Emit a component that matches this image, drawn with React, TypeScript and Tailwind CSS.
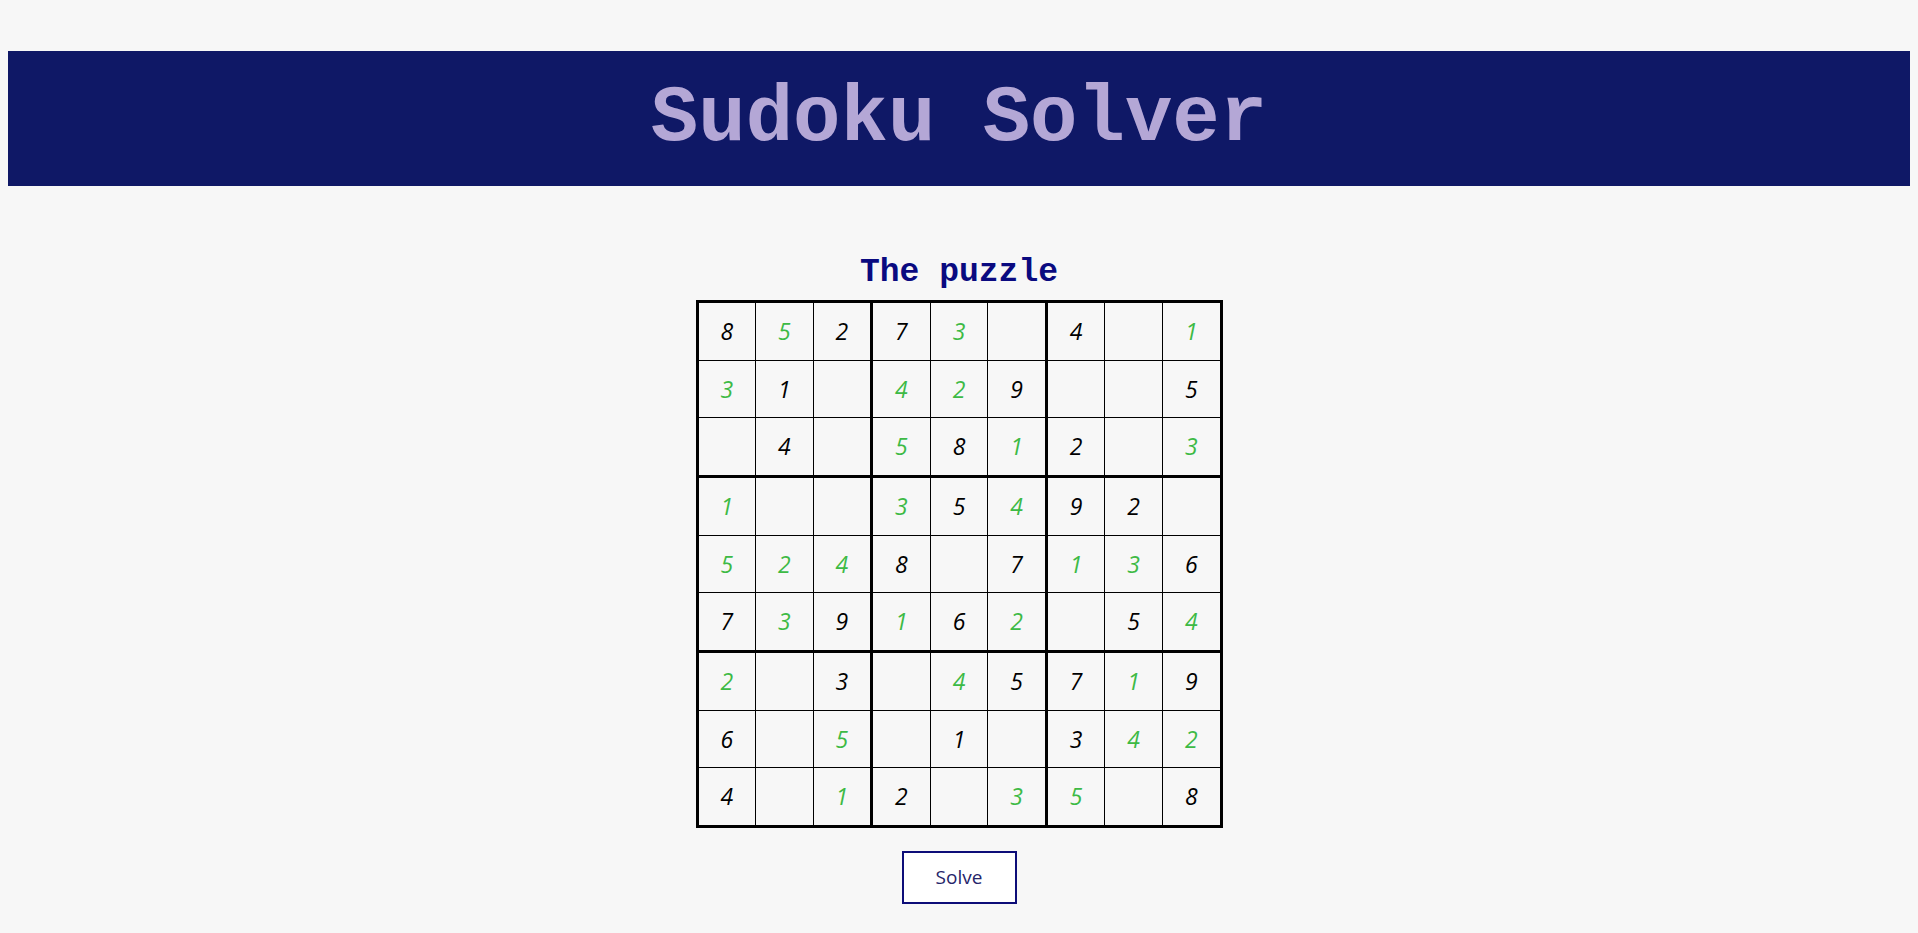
import React from "react";

// "*" marks a digit filled in by the solver (green), "." is an empty cell
const rows = [
  "8 5* 2 7 3* . 4 . 1*",
  "3* 1 . 4* 2* 9 . . 5",
  ". 4 . 5* 8 1* 2 . 3*",
  "1* . . 3* 5 4* 9 2 .",
  "5* 2* 4* 8 . 7 1* 3* 6",
  "7 3* 9 1* 6 2* . 5 4*",
  "2* . 3 . 4* 5 7 1* 9",
  "6 . 5* . 1 . 3 4* 2*",
  "4 . 1* 2 . 3* 5* . 8",
];

const grid = rows.map((r) => r.split(" "));

function Cell({ value }: { value: string }) {
  const solved = value.endsWith("*");
  const digit = value === "." ? "" : value.replace("*", "");
  return (
    <div
      className={`flex items-center justify-center bg-[#f7f7f7] italic text-[23px] ${
        solved ? "text-[#3dba45]" : "text-black"
      }`}
    >
      {digit}
    </div>
  );
}

export default function App() {
  return (
    <div
      className="min-h-screen bg-[#f7f7f7] px-2 pt-[51px] pb-8"
      style={{ fontFamily: '"Open Sans", "Noto Sans", sans-serif' }}
    >
      <header className="flex h-[135px] items-center justify-center bg-[#0f1866]">
        <h1 className="font-['Liberation_Mono',monospace] text-[79px] font-bold leading-[80px] text-[#b4a7d6]">
          Sudoku Solver
        </h1>
      </header>

      <main className="mt-[67px] flex flex-col items-center">
        <h2 className="font-['Liberation_Mono',monospace] text-[33px] font-bold leading-[40px] text-[#0a0a80]">
          The puzzle
        </h2>

        {/* Board: 3x3 boxes, each 3x3 cells */}
        <div className="mt-[7px] grid h-[528px] w-[527px] grid-cols-3 grid-rows-3 gap-[3px] bg-black p-[3px]">
          {[0, 1, 2].map((br) =>
            [0, 1, 2].map((bc) => (
              <div key={`${br}-${bc}`} className="grid grid-cols-3 grid-rows-3 gap-px bg-black">
                {[0, 1, 2].map((ir) =>
                  [0, 1, 2].map((ic) => (
                    <Cell key={`${ir}-${ic}`} value={grid[br * 3 + ir][bc * 3 + ic]} />
                  ))
                )}
              </div>
            ))
          )}
        </div>

        <button className="mt-[23px] h-[53px] w-[115px] border-2 border-[#0d0d78] bg-white text-[19px] text-[#25256a]">
          Solve
        </button>
      </main>
    </div>
  );
}
